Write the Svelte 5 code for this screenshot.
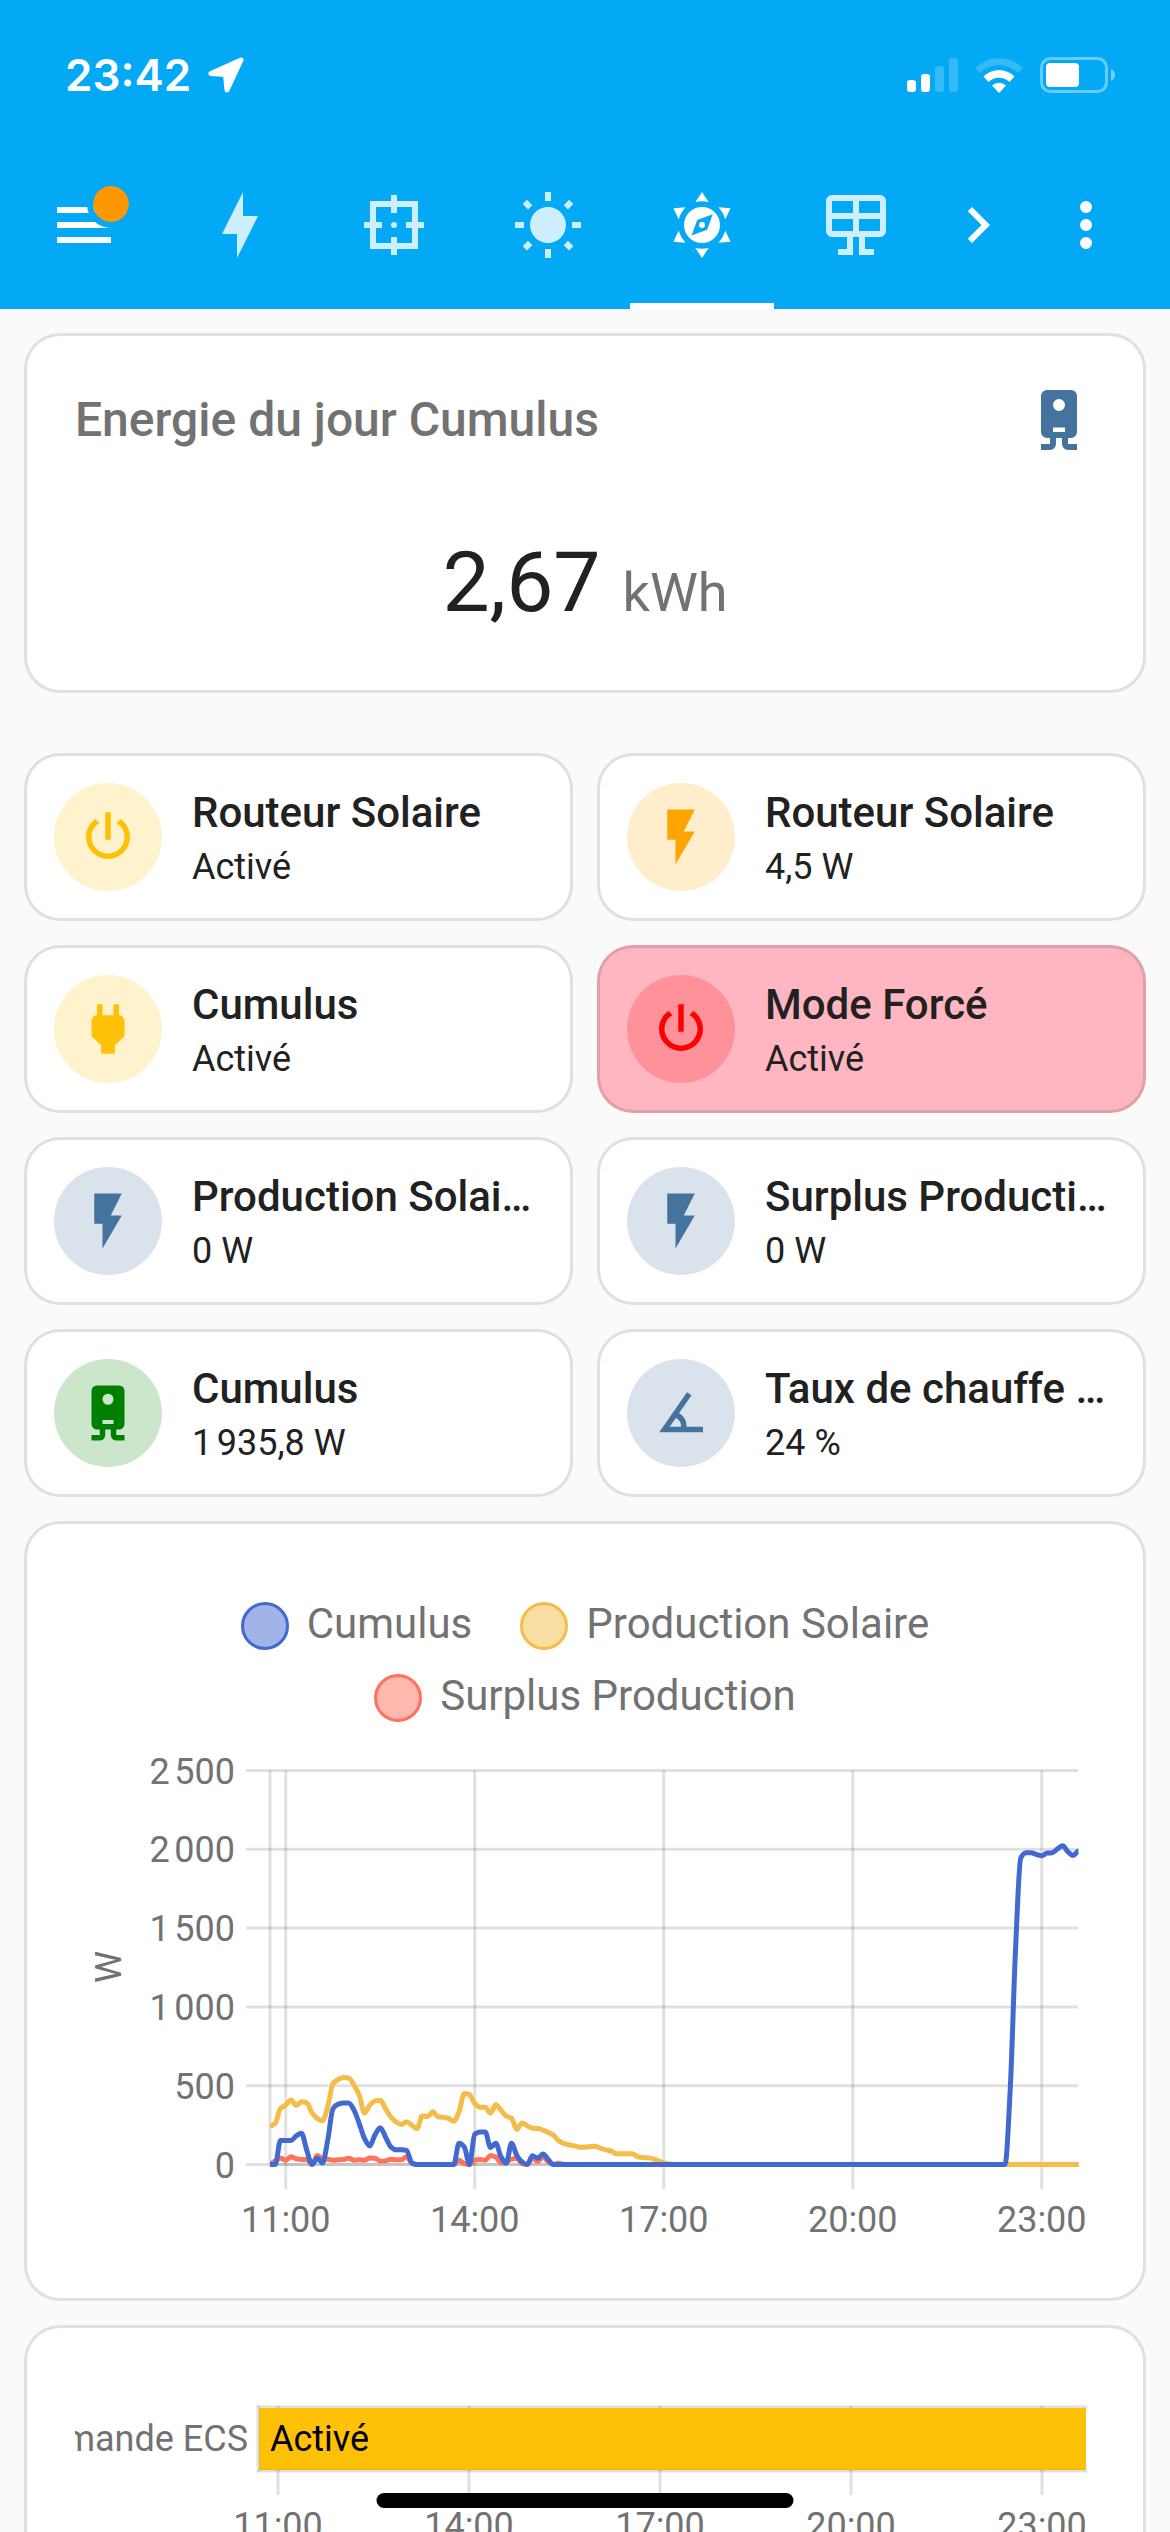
<script>
  const icons = {
    menu: "M3,6H21V8H3V6M3,11H21V13H3V11M3,16H21V18H3V16Z",
    bolt: "M11 15H6L13 1V9H18L11 23V15Z",
    focus:
      "M4 4H11V2H13V4H20V11H22V13H20V20H13V22H11V20H4V13H2V11H4V4M6 6V11H8V13H6V18H11V16H13V18H18V13H16V11H18V6H13V8H11V6H6M12 11A1 1 0 0 1 12 13A1 1 0 0 1 12 11Z",
    sun: "M3.55 19.09L4.96 20.5L6.76 18.71L5.34 17.29M12 6C8.69 6 6 8.69 6 12S8.69 18 12 18 18 15.31 18 12C18 8.68 15.31 6 12 6M20 13H23V11H20M17.24 18.71L19.04 20.5L20.45 19.09L18.66 17.29M20.45 5L19.04 3.6L17.24 5.39L18.66 6.81M13 1H11V4H13M6.76 5.39L4.96 3.6L3.55 5L5.34 6.81L6.76 5.39M1 13H4V11H1M13 20H11V23H13",
    compass:
      "M12 6A6 6 0 0 1 12 18A6 6 0 0 1 12 6M15.6 8.4L10.4 10.3L8.5 15.5L13.7 13.6L15.6 8.4M12 11A1 1 0 0 1 12 13A1 1 0 0 1 12 11M12 1L14.2 4.3Q12 3.8 9.8 4.3ZM12 23L14.2 19.7Q12 20.2 9.8 19.7ZM2.5 6.4L6.5 6.1Q4.9 7.8 4.2 10.1ZM21.5 6.4L17.5 6.1Q19.1 7.8 19.8 10.1ZM2.5 17.6L6.5 17.9Q4.9 16.2 4.2 13.9ZM21.5 17.6L17.5 17.9Q19.1 16.2 19.8 13.9Z",
    panel:
      "M4 2H20A2 2 0 0 1 22 4V14A2 2 0 0 1 20 16H15V20H18V22H13V16H11V22H6V20H9V16H4A2 2 0 0 1 2 14V4A2 2 0 0 1 4 2M4 4V8H11V4H4M13 4V8H20V4H13M4 10V14H11V10H4M13 10V14H20V10H13Z",
    chevron: "M8.59,16.58L13.17,12L8.59,7.41L10,6L16,12L10,18L8.59,16.58Z",
    dots: "M12,16A2,2 0 0,1 14,18A2,2 0 0,1 12,20A2,2 0 0,1 10,18A2,2 0 0,1 12,16M12,10A2,2 0 0,1 14,12A2,2 0 0,1 12,14A2,2 0 0,1 10,12A2,2 0 0,1 12,10M12,4A2,2 0 0,1 14,6A2,2 0 0,1 12,8A2,2 0 0,1 10,6A2,2 0 0,1 12,4Z",
    power:
      "M16.56,5.44L15.11,6.89C16.84,7.94 18,9.83 18,12A6,6 0 0,1 12,18A6,6 0 0,1 6,12C6,9.83 7.16,7.94 8.88,6.88L7.44,5.44C5.36,6.88 4,9.28 4,12A8,8 0 0,0 12,20A8,8 0 0,0 20,12C20,9.28 18.64,6.88 16.56,5.44M13,3H11V13H13",
    flash: "M7,2V13H10V22L17,10H13L17,2H7Z",
    plug: "M16,7V3H14V7H10V3H8V7C7,7 6,8 6,9V14.5L9.5,18V21H14.5V18L18,14.5V9C18,8 17,7 16,7Z",
    boiler:
      "M8 2H16A2 2 0 0 1 18 4V16A2 2 0 0 1 16 18H15V20H18V22H15A2 2 0 0 1 13 20V18H11V20A2 2 0 0 1 9 22H6V20H9V18H8A2 2 0 0 1 6 16V4A2 2 0 0 1 8 2M12 5A2 2 0 0 0 12 9A2 2 0 0 0 12 5M10 14.5V16H14V14.5H10Z",
    angle:
      "M20,19H4.09L14.18,4.43L15.82,5.57L11.28,12.13C12.89,12.96 14,14.62 14,16.54C14,16.7 14,16.85 13.97,17H20V19M7.91,17H11.96C12,16.85 12,16.7 12,16.54C12,15.28 11.24,14.22 10.14,13.78L7.91,17Z",
  };

  const tabs = [
    { icon: "bolt", label: "Energie" },
    { icon: "focus", label: "Pilotage" },
    { icon: "sun", label: "Soleil" },
    { icon: "compass", label: "Routeur solaire", active: true },
    { icon: "panel", label: "Panneaux" },
  ];

  const tiles = [
    { name: "Routeur Solaire", state: "Activé", icon: "power", tone: "amber" },
    { name: "Routeur Solaire", state: "4,5 W", icon: "flash", tone: "orange" },
    { name: "Cumulus", state: "Activé", icon: "plug", tone: "amber" },
    { name: "Mode Forcé", state: "Activé", icon: "power", tone: "red" },
    { name: "Production Solaire PV", state: "0 W", icon: "flash", tone: "blue" },
    { name: "Surplus Production", state: "0 W", icon: "flash", tone: "blue" },
    { name: "Cumulus", state: "1\u202f935,8 W", icon: "boiler", tone: "green" },
    { name: "Taux de chauffe Cumulus", state: "24 %", icon: "angle", tone: "blue" },
  ];

  // one value every 5 minutes, from 10:45 to 23:35
  const count = 155;
  const fill = (n) => Array(n).fill(0);

  const heater = [
    0, 0, 152, 152, 152, 182, 199, 91, 0, 40, 10, 155, 355, 383, 391, 391, 345,
    260, 165, 118, 188, 233, 175, 112, 93, 93, 91, 10, ...fill(8), 135, 112, 0,
    192, 207, 207, 108, 135, 49, 8, 135, 59, 17, 0, 55, 40, 66, 32, ...fill(87),
    480, 1360, 1945, 1978, 1978, 1967, 1959, 1976, 1978, 2003, 2022, 1984, 1961,
    1990,
  ];
  const solar = [
    245, 260, 355, 376, 410, 374, 398, 391, 328, 292, 277, 366, 514, 539, 552,
    548, 503, 440, 326, 376, 404, 408, 355, 302, 271, 254, 271, 250, 228, 307,
    305, 334, 302, 300, 292, 275, 334, 450, 444, 387, 364, 364, 326, 379, 345,
    307, 294, 222, 264, 245, 230, 228, 218, 203, 186, 150, 133, 125, 118, 110,
    110, 114, 116, 102, 93, 85, 68, 68, 68, 68, 49, 44, 42, 36, 23, 10, 4,
    ...fill(count - 77),
  ];
  const surplus = [
    6, 23, 42, 27, 49, 36, 32, 32, 2, 57, 36, 34, 27, 30, 32, 40, 27, 30, 27,
    42, 40, 21, 23, 34, 30, 30, 49, 10, ...fill(8), 27, 6, 0, 27, 32, 27, 57,
    47, 10, 17, 34, 40, 6, 0, 42, 19, 49, 17, 0, 8, ...fill(count - 56),
  ];

  const legend = [
    { name: "Cumulus", tone: "heater" },
    { name: "Production Solaire", tone: "solar" },
    { name: "Surplus Production", tone: "surplus" },
  ];
  const lines = [
    { tone: "surplus", values: surplus },
    { tone: "solar", values: solar },
    { tone: "heater", values: heater },
  ];

  const hours = ["11:00", "14:00", "17:00", "20:00", "23:00"];
  const watts = [0, 500, 1000, 1500, 2000, 2500];

  const left = 195;
  const right = 1003;
  const px = (i) => left + i * 5.25;
  const py = (w) => 424.5 - w * 0.1576;
  const hourX = (i) => px(3 + i * 36);
  const format = (w) =>
    w < 1000 ? `${w}` : `${Math.floor(w / 1000)}\u202f${String(w % 1000).padStart(3, "0")}`;

  // cubic curve that never overshoots its points
  function curve(values) {
    const slope = (i) => {
      const a = values[i] - values[i - 1];
      const b = values[i + 1] - values[i];
      if (!(a * b > 0)) return 0;
      return (2 * a * b) / (a + b);
    };
    let d = `M${px(0)},${py(values[0])}`;
    for (let i = 1; i < values.length; i++) {
      const c1 = values[i - 1] + slope(i - 1) / 3;
      const c2 = values[i] - slope(i) / 3;
      d += `C${px(i - 1 + 1 / 3)},${py(c1)} ${px(i - 1 / 3)},${py(c2)} ${px(i)},${py(values[i])}`;
    }
    return d;
  }
</script>

{#snippet icon(name)}
  <svg class="icon" viewBox="0 0 24 24" aria-hidden="true">
    <path d={icons[name]} fill-rule="evenodd" />
  </svg>
{/snippet}

<div class="app">
  <header>
    <div class="status">
      <span class="time">23:42</span>
      <svg class="arrow" width="36" height="36" viewBox="0 0 36 36">
        <path d="M33 3L3 16.5L17.500 17.500L19 33Z" />
      </svg>
      <svg class="signal" width="51" height="36" viewBox="0 0 51 36">
        <rect x="0" y="23" width="9" height="12" rx="3" />
        <rect x="14" y="17" width="9" height="18" rx="3" />
        <rect class="dim" x="28" y="9" width="9" height="26" rx="3" />
        <rect class="dim" x="42" y="1" width="9" height="34" rx="3" />
      </svg>
      <svg width="48" height="36" viewBox="0 0 48 36">
        <path class="dim" d="M0 11A34 34 0 0 1 48 11L43 16A27 27 0 0 0 5 16Z" />
        <path d="M8.500 19.500A22 22 0 0 1 39.500 19.500L34.500 25A15 15 0 0 0 13.500 25Z" />
        <path d="M17 28.500A10 10 0 0 1 31 28.500L24 36Z" />
      </svg>
      <svg width="76" height="36" viewBox="0 0 76 36">
        <rect class="outline" x="1.500" y="1.500" width="65" height="33" rx="9" />
        <rect x="6" y="6" width="33" height="24" rx="4" />
        <path class="half" d="M71 12Q75 14 75 18T71 24Z" />
      </svg>
    </div>

    <div class="toolbar">
      <button class="menu" aria-label="Menu">
        {@render icon("menu")}
        <span class="badge"></span>
      </button>
      <nav>
        {#each tabs as tab}
          <a href="#{tab.icon}" class:active={tab.active} aria-label={tab.label}>
            {@render icon(tab.icon)}
          </a>
        {/each}
      </nav>
      <button class="next" aria-label="Suivant">{@render icon("chevron")}</button>
      <button class="more" aria-label="Options">{@render icon("dots")}</button>
    </div>
  </header>

  <main>
    <section class="card energy">
      <div class="title">
        <h2>Energie du jour Cumulus</h2>
        {@render icon("boiler")}
      </div>
      <p><span class="value">2,67</span><span class="unit">kWh</span></p>
    </section>

    <div class="tiles">
      {#each tiles as tile}
        <button class="card tile {tile.tone}">
          <span class="shape">{@render icon(tile.icon)}</span>
          <span class="info">
            <span class="name">{tile.name}</span>
            <span class="state">{tile.state}</span>
          </span>
        </button>
      {/each}
    </div>

    <section class="card history">
      <ul>
        {#each legend as item}
          <li><span class="dot {item.tone}"></span>{item.name}</li>
        {/each}
      </ul>
      <svg class="chart" viewBox="0 0 1020 510">
        {#each watts as w}
          <line x1="171" x2={right} y1={py(w)} y2={py(w)} />
          <text class="end" x="160" y={py(w) + 13}>{format(w)}</text>
        {/each}
        <line x1={left} x2={left} y1={py(2500)} y2={py(0)} />
        <line x1={left} x2={right} y1={py(0)} y2={py(0)} />
        {#each hours as hour, i}
          <line x1={hourX(i)} x2={hourX(i)} y1={py(2500)} y2="449" />
          <text class="middle" x={hourX(i)} y="492">{hour}</text>
        {/each}
        <text class="middle" transform="translate(46 227) rotate(-90)">W</text>
        {#each lines as line}
          <path class="line {line.tone}" d={curve(line.values)} />
        {/each}
      </svg>
    </section>

    <section class="card timeline">
      <svg class="chart" viewBox="0 0 1020 180">
        <text class="end" x="173" y="75">Commande ECS</text>
        <line x1="183" x2="1012" y1="31" y2="31" />
        {#each hours as hour, i}
          <line x1={203 + i * 191} x2={203 + i * 191} y1="30" y2="119" />
          <text class="middle" x={203 + i * 191} y="162">{hour}</text>
        {/each}
        <rect class="on" x="184" y="32" width="827" height="62" />
        <line x1="183" x2="183" y1="29" y2="96" />
        <line x1="183" x2="1012" y1="95" y2="95" />
        <text class="on-label" x="195" y="75">Activé</text>
      </svg>
    </section>
  </main>

  <div class="home"></div>
</div>

<style>
  :global(body) {
    margin: 0;
    background: #fafafa;
  }

  .app {
    height: 100vh;
    overflow: hidden;
    font-family: Roboto, "Noto Sans", sans-serif;
    color: #212121;
  }

  header {
    background: #03a9f4;
    color: #fff;
  }

  svg {
    display: block;
    flex: none;
    fill: currentColor;
  }

  .icon {
    width: 72px;
    height: 72px;
  }

  button {
    margin: 0;
    padding: 0;
    border: 0;
    background: none;
    color: inherit;
    font: inherit;
    text-align: left;
  }

  .status {
    display: flex;
    align-items: center;
    gap: 17px;
    box-sizing: border-box;
    height: 141px;
    padding: 8px 54px 0 65px;
  }

  .time {
    font-family: Inter, sans-serif;
    font-size: 44px;
    font-weight: 600;
    line-height: 56px;
  }

  .arrow {
    stroke: #fff;
    stroke-width: 5px;
    stroke-linejoin: round;
  }

  .signal {
    margin-left: auto;
  }

  .dim {
    opacity: 0.2;
  }

  .half {
    opacity: 0.45;
  }

  .outline {
    fill: none;
    stroke: #fff;
    stroke-width: 3px;
    opacity: 0.4;
  }

  .toolbar {
    display: flex;
    align-items: center;
    height: 168px;
    padding: 0 48px;
  }

  .menu {
    position: relative;
  }

  .badge {
    position: absolute;
    top: -9px;
    right: -15px;
    width: 36px;
    height: 36px;
    border: 6px solid #03a9f4;
    border-radius: 50%;
    background: #ff9800;
    background-clip: padding-box;
  }

  nav {
    display: flex;
    gap: 10px;
    height: 100%;
    margin-left: 48px;
  }

  nav a {
    display: flex;
    align-items: center;
    box-sizing: border-box;
    padding: 6px 36px 0;
    border-bottom: 6px solid transparent;
    color: rgba(255, 255, 255, 0.8);
  }

  nav a.active {
    border-color: #fff;
    color: #fff;
  }

  .next {
    margin-left: auto;
  }

  .more {
    margin-left: 36px;
  }

  main {
    padding: 24px;
  }

  .card {
    box-sizing: border-box;
    border: 3px solid rgba(0, 0, 0, 0.12);
    border-radius: 36px;
    background: #fff;
  }

  .energy {
    padding: 24px 48px 44px;
    margin-bottom: 60px;
  }

  .title {
    display: flex;
    align-items: center;
    justify-content: space-between;
    color: #44739e;
  }

  h2 {
    margin: 0;
    color: #727272;
    font-size: 48px;
    font-weight: 500;
    line-height: 120px;
  }

  .energy p {
    display: flex;
    align-items: baseline;
    justify-content: center;
    gap: 22px;
    margin: 40px 0 0;
  }

  .value {
    font-size: 84px;
    line-height: 126px;
  }

  .unit {
    color: #727272;
    font-size: 54px;
    line-height: 60px;
  }

  .tiles {
    display: grid;
    grid-template-columns: repeat(2, minmax(0, 1fr));
    gap: 24px;
    margin-bottom: 24px;
  }

  .tile {
    display: flex;
    align-items: center;
    gap: 30px;
    padding: 27px;
  }

  .shape {
    display: grid;
    place-items: center;
    flex: none;
    width: 108px;
    height: 108px;
    border-radius: 50%;
  }

  .shape .icon {
    width: 66px;
    height: 66px;
  }

  .amber .shape {
    background: rgba(255, 193, 7, 0.2);
    color: #ffc107;
  }

  .orange .shape {
    background: rgba(255, 165, 0, 0.2);
    color: #ffa500;
  }

  .blue .shape {
    background: rgba(68, 115, 158, 0.2);
    color: #44739e;
  }

  .green .shape {
    background: rgba(0, 128, 0, 0.2);
    color: #008000;
  }

  .tile.red {
    background: #ffb6c1;
  }

  .red .shape {
    background: rgba(255, 0, 0, 0.2);
    color: #f00;
  }

  .info {
    flex: 1;
    min-width: 0;
  }

  .name,
  .state {
    display: block;
    overflow: hidden;
    text-overflow: ellipsis;
    white-space: nowrap;
  }

  .name {
    font-size: 42px;
    font-weight: 500;
    line-height: 60px;
  }

  .state {
    font-size: 36px;
    line-height: 48px;
  }

  .history {
    padding: 78px 48px 48px;
    margin-bottom: 24px;
  }

  ul {
    display: flex;
    flex-wrap: wrap;
    justify-content: center;
    gap: 24px 48px;
    margin: 0 0 18px;
    padding: 0;
    list-style: none;
    color: #727272;
    font-size: 42px;
    line-height: 44px;
  }

  li {
    display: flex;
    gap: 18px;
  }

  .dot {
    box-sizing: border-box;
    width: 48px;
    height: 48px;
    border: 3px solid currentColor;
    border-radius: 50%;
  }

  .heater {
    color: #4269d0;
    background: #a0b4e7;
  }

  .solar {
    color: #f4bd4a;
    background: #f9dea4;
  }

  .surplus {
    color: #ff725c;
    background: #ffb8ad;
  }

  .chart {
    width: 100%;
    font-size: 36px;
    fill: #727272;
  }

  .chart line {
    stroke: rgba(0, 0, 0, 0.12);
    stroke-width: 3px;
  }

  .line {
    fill: none;
    stroke: currentColor;
    stroke-width: 5px;
    stroke-linejoin: round;
  }

  .end {
    text-anchor: end;
  }

  .middle {
    text-anchor: middle;
  }

  .timeline {
    padding: 48px;
  }

  .on {
    fill: #ffc107;
  }

  .on-label {
    fill: #000;
  }

  .home {
    position: fixed;
    bottom: 24px;
    left: 50%;
    width: 417px;
    height: 15px;
    border-radius: 8px;
    background: #000;
    transform: translateX(-50%);
  }
</style>
